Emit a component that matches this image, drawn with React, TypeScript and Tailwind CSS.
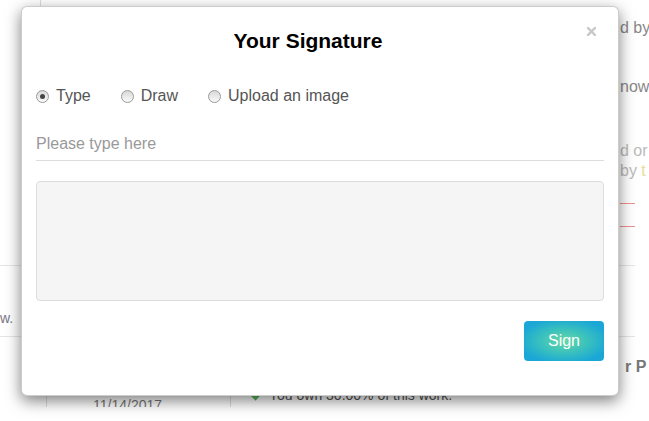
import React from "react";

function Radio({ label, checked }: { label: string; checked?: boolean }) {
  return (
    <label className="flex items-center">
      <span className="mr-[7px] flex h-[13px] w-[13px] items-center justify-center rounded-full border border-[#9a9a9a] bg-[linear-gradient(#d8d8d8,#fafafa)]">
        {checked && <span className="h-[5px] w-[5px] rounded-full bg-[#444]" />}
      </span>
      <span>{label}</span>
    </label>
  );
}

export default function App() {
  return (
    <div className="relative h-[421px] w-[649px] overflow-hidden bg-white font-['Liberation_Sans',Arial,sans-serif]">
      {/* background page */}
      <div className="h-[407px] w-[635px] overflow-y-clip">
        <div className="flex h-[265px]">
          <div className="w-[40px]" />
          <div className="flex-1 border-l border-[#ddd]" />
          <div className="flex w-[15px] flex-col text-[16px] leading-[20px] whitespace-nowrap">
            <div className="mt-[18px] text-[#888]">d by</div>
            <div className="mt-[39px] text-[#888]">now</div>
            <div className="mt-[44px] text-[#bbb]">d or</div>
            <div className="text-[#bbb]">by <span className="text-[#e8dca0]">t</span></div>
            <div className="mt-[22px] h-[24px] border-y border-[#f09090]" />
          </div>
        </div>
        <div className="h-[71px] border-t border-[#e5e5e5]">
          <div className="pt-[42px] text-[14px] leading-[20px] text-[#778]">w.</div>
        </div>
        <div className="h-[71px] border-t border-[#e5e5e5]">
          <div className="flex h-[48px]">
            <div className="flex-1" />
            <div className="w-[10px] pt-[20px] text-[16px] font-bold leading-[20px] whitespace-nowrap text-[#777]">r P</div>
          </div>
          <div className="flex h-[23px]">
            <div className="w-[46px]" />
            <div className="w-[184px] border-l border-[#ddd] pt-[10px] pl-[46px] text-[14px] leading-[20px] text-[#777]">11/14/2017</div>
            <div className="flex flex-1 items-start border-l border-[#ddd] pl-[20px] text-[14px] leading-[20px] text-[#555]">
              <svg width="12" height="12" viewBox="0 0 12 12" className="mt-[4px] mr-[6px]">
                <path d="M1 6 L4.5 9.5 L11 2" stroke="#5cb85c" strokeWidth="3" fill="none" />
              </svg>
              <span>You own 30.00% of this work.</span>
            </div>
          </div>
        </div>
      </div>

      {/* modal */}
      <div className="absolute top-[6px] left-[21px] flex h-[390px] w-[598px] flex-col rounded-[6px] border border-[rgba(0,0,0,0.2)] bg-white px-[14px] pt-[19px] shadow-[0_5px_15px_rgba(0,0,0,0.5)]">
        <svg width="9" height="9" viewBox="0 0 9 9" className="absolute top-[20px] left-[565px]">
          <path d="M1 1 L8 8 M8 1 L1 8" stroke="#c8c8c8" strokeWidth="2.4" strokeLinecap="square" />
        </svg>
        <h2 className="pr-[24px] text-center text-[21px] leading-[30px] font-bold text-black">Your Signature</h2>
        <div className="mt-[28px] flex h-[24px] items-center gap-[30px] text-[16px] text-[#555]">
          <Radio label="Type" checked />
          <Radio label="Draw" />
          <Radio label="Upload an image" />
        </div>
        <input
          placeholder="Please type here"
          className="mt-[19px] h-[34px] w-full border-b border-[#ddd] bg-transparent text-[16px] text-[#555] outline-none placeholder:text-[#999]"
        />
        <div className="mt-[20px] h-[120px] rounded-[4px] border border-[#ddd] bg-[#f5f5f5]" />
        <button className="mt-[20px] h-[40px] w-[80px] self-end rounded-[4px] bg-[radial-gradient(ellipse_at_center,#66d8a6_0%,#3cc2bc_40%,#1aa7d6_80%)] text-[16px] text-white">
          Sign
        </button>
      </div>
    </div>
  );
}
